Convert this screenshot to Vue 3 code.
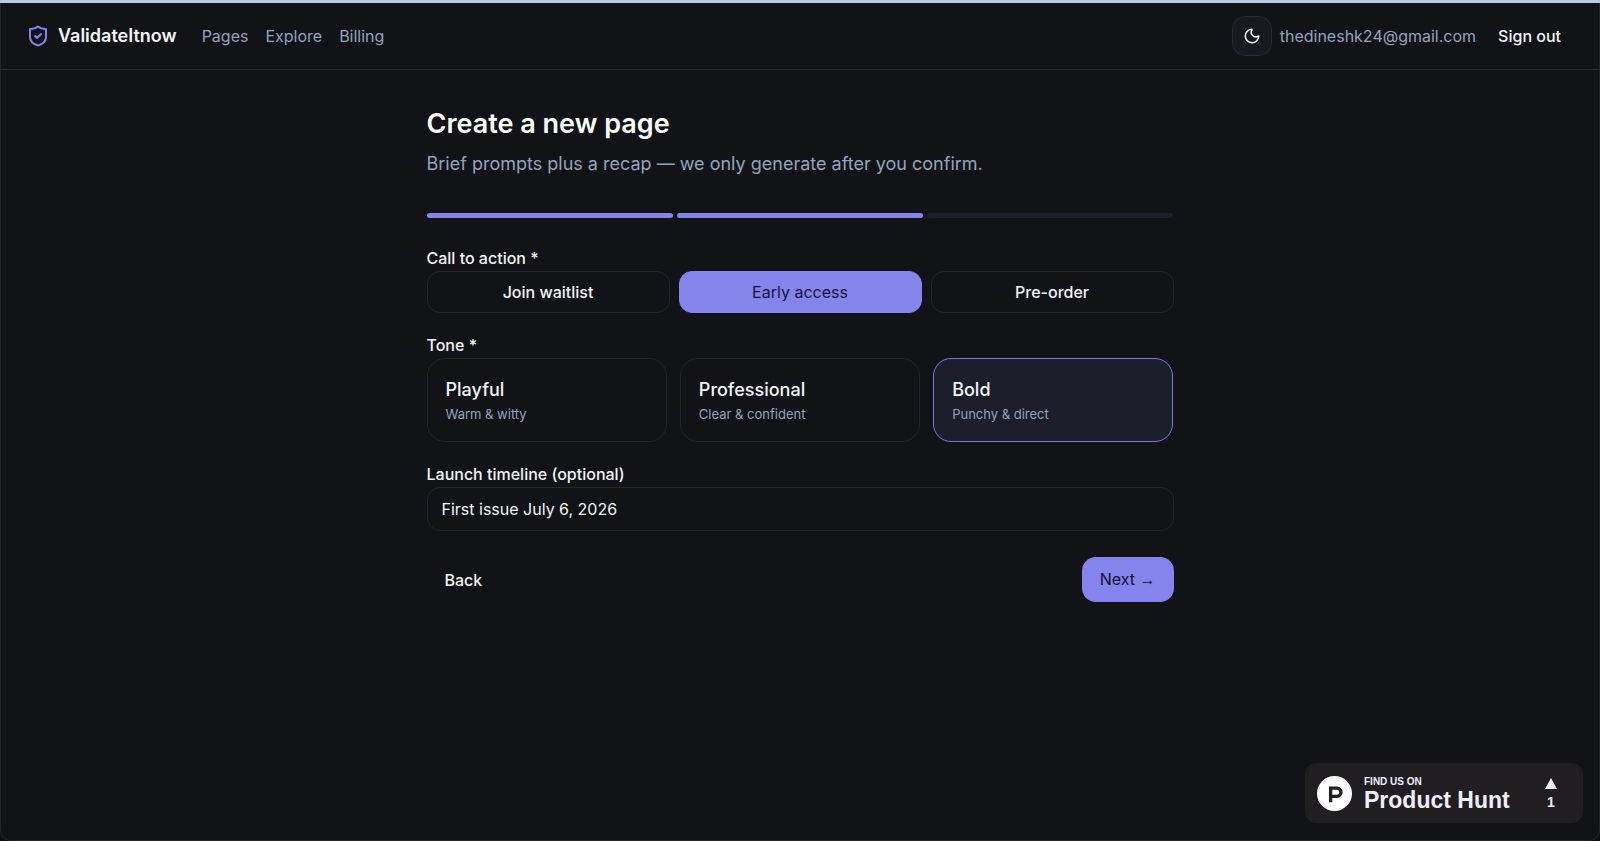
<script setup>
import { ref } from 'vue'

const links = ['Pages', 'Explore', 'Billing']
const steps = [1, 2, 3]
const currentStep = ref(2)
const actions = ['Join waitlist', 'Early access', 'Pre-order']
const action = ref('Early access')
const tones = [
  { name: 'Playful', hint: 'Warm & witty' },
  { name: 'Professional', hint: 'Clear & confident' },
  { name: 'Bold', hint: 'Punchy & direct' },
]
const tone = ref('Bold')
const timeline = ref('First issue July 6, 2026')
</script>

<template>
  <div class="page">
    <div class="window">
      <header class="topbar">
        <a class="brand" href="#">
          <svg class="shield" viewBox="0 0 24 24" fill="none" stroke="currentColor" stroke-width="2" stroke-linecap="round" stroke-linejoin="round" aria-hidden="true">
            <path d="M12 2.500C10 4.200 7.500 5 4 5v8c0 4.500 3.200 7 8 8.500 4.800-1.500 8-4 8-8.500V5c-3.500 0-6-.8-8-2.500z" />
            <path d="m9 12 2 2 4-4" />
          </svg>
          <span>ValidateItnow</span>
        </a>
        <nav class="links">
          <a v-for="l in links" :key="l" href="#">{{ l }}</a>
        </nav>
        <div class="account">
          <button class="theme" type="button" aria-label="Toggle theme">
            <svg viewBox="0 0 24 24" fill="none" stroke="currentColor" stroke-width="2" stroke-linecap="round" stroke-linejoin="round" aria-hidden="true">
              <path d="M20.985 12.486a9 9 0 1 1-9.473-9.472c.405-.022.617.46.402.803a6 6 0 0 0 8.268 8.268c.344-.215.825-.004.803.401" />
            </svg>
          </button>
          <span class="email">thedineshk24@gmail.com</span>
          <button class="signout" type="button">Sign out</button>
        </div>
      </header>

      <main class="content">
        <h1>Create a new page</h1>
        <p class="lead">Brief prompts plus a recap — we only generate after you confirm.</p>

        <div class="progress">
          <span v-for="s in steps" :key="s" class="step" :class="{ done: s <= currentStep }"></span>
        </div>

        <section class="field" role="group" aria-labelledby="cta-label">
          <div id="cta-label" class="label">Call to action *</div>
          <div class="actions">
            <button v-for="a in actions" :key="a" type="button" class="action" :class="{ active: a === action }" :aria-pressed="a === action" @click="action = a">{{ a }}</button>
          </div>
        </section>

        <section class="field" role="group" aria-labelledby="tone-label">
          <div id="tone-label" class="label">Tone *</div>
          <div class="tones">
            <button v-for="t in tones" :key="t.name" type="button" class="tone" :class="{ active: t.name === tone }" :aria-pressed="t.name === tone" @click="tone = t.name">
              <span class="tone-name">{{ t.name }}</span>
              <span class="tone-hint">{{ t.hint }}</span>
            </button>
          </div>
        </section>

        <section class="field">
          <label class="label" for="timeline">Launch timeline (optional)</label>
          <input id="timeline" v-model="timeline" type="text" />
        </section>

        <div class="footer">
          <button class="back" type="button">Back</button>
          <button class="next" type="button">Next <span class="arrow">→</span></button>
        </div>
      </main>
    </div>

    <a class="hunt" href="#">
      <svg class="hunt-logo" viewBox="0 0 36 36" aria-hidden="true">
        <circle cx="18" cy="18" r="18" fill="#fff" />
        <path d="M14 27V12.500h6.500a4.200 4.200 0 0 1 0 8.400H14" fill="none" stroke="#211e21" stroke-width="3.400" />
      </svg>
      <span class="hunt-text">
        <span class="hunt-small">FIND US ON</span>
        <span class="hunt-big">Product Hunt</span>
      </span>
      <span class="votes">
        <svg viewBox="0 0 12 11" aria-hidden="true"><path d="M6 0l6 11H0z" fill="#eef0ff" /></svg>
        <span>1</span>
      </span>
    </a>
  </div>
</template>

<style>
body {
  background: #0c0f0f;
}
</style>

<style scoped>
.page {
  box-sizing: border-box;
  min-height: 100vh;
  display: flex;
  border-top: 3px solid #b8cae8;
  font-family: Inter, "Liberation Sans", sans-serif;
  font-size: 16px;
  line-height: 24px;
  color: #f4f5f8;
}
.page *,
.page *::before {
  box-sizing: border-box;
}
.window {
  flex: 1;
  background: #111316;
  border: 1px solid #24262b;
  border-top: 0;
  border-radius: 0 0 10px 10px;
}
button,
input {
  font: inherit;
  color: inherit;
  margin: 0;
}
button {
  cursor: pointer;
}
a {
  color: inherit;
  text-decoration: none;
}
.topbar {
  display: flex;
  align-items: center;
  height: 67px;
  padding: 0 20px 0 25px;
  border-bottom: 1px solid #26282d;
}
.brand {
  display: flex;
  align-items: center;
  gap: 8px;
  font-size: 18px;
  font-weight: 600;
}
.shield {
  width: 24px;
  height: 24px;
  color: #8583ec;
}
.links {
  display: flex;
  gap: 17px;
  margin-left: 25px;
  color: #94a3bf;
}
.account {
  display: flex;
  align-items: center;
  margin-left: auto;
}
.theme {
  width: 40px;
  height: 40px;
  padding: 0;
  display: grid;
  place-items: center;
  border: 1px solid #292b32;
  border-radius: 13px;
  background: #181a21;
}
.theme svg {
  width: 18px;
  height: 18px;
}
.email {
  margin-left: 8px;
  color: #94a3bf;
}
.signout {
  margin-left: 4px;
  padding: 9px 18px;
  border: 0;
  background: none;
  font-weight: 500;
}
.content {
  max-width: 747px;
  margin: 0 auto;
  padding: 36px 0;
}
h1 {
  margin: 0;
  font-size: 27px;
  line-height: 36px;
  font-weight: 600;
  color: #fff;
}
.lead {
  margin: 8px 0 0;
  font-size: 18px;
  line-height: 28px;
  color: #94a3bf;
}
.progress {
  display: grid;
  grid-template-columns: repeat(3, 1fr);
  gap: 4px;
  margin: 35px 0 27px;
}
.step {
  height: 5px;
  border-radius: 3px;
  background: #1e1f28;
}
.step.done {
  background: #8583ec;
}
.field {
  margin-bottom: 19px;
}
.label {
  display: block;
  line-height: 26px;
  font-weight: 500;
}
.actions {
  display: grid;
  grid-template-columns: repeat(3, 1fr);
  gap: 9px;
}
.action {
  height: 42px;
  padding: 0 18px;
  border: 1px solid #24262d;
  border-radius: 13px;
  background: transparent;
  font-weight: 500;
}
.action.active {
  border-color: #8583ec;
  background: #8583ec;
  color: #15163a;
  font-weight: 400;
}
.tones {
  display: grid;
  grid-template-columns: repeat(3, 1fr);
  gap: 13px;
}
.tone {
  display: flex;
  flex-direction: column;
  align-items: flex-start;
  height: 84px;
  padding: 18px;
  border: 1px solid #24262d;
  border-radius: 18px;
  background: transparent;
  text-align: left;
}
.tone.active {
  border-color: #7a79dc;
  background: #1c1e2b;
}
.tone-name {
  font-size: 18px;
  line-height: 26px;
  font-weight: 500;
}
.tone-hint {
  font-size: 13px;
  line-height: 22px;
  color: #94a3bf;
}
input {
  display: block;
  width: 100%;
  height: 44px;
  padding: 0 14px;
  border: 1px solid #24262f;
  border-radius: 13px;
  background: transparent;
  outline: none;
}
.footer {
  display: flex;
  justify-content: space-between;
  margin-top: 26px;
}
.back,
.next {
  height: 45px;
  padding: 0 18px;
  border: 0;
  border-radius: 14px;
  background: none;
  font-weight: 500;
}
.next {
  background: #8583ec;
  color: #101233;
  font-weight: 400;
}
.arrow {
  font-family: "Liberation Sans", Arial, sans-serif;
}
.hunt {
  position: fixed;
  right: 17px;
  bottom: 18px;
  display: flex;
  align-items: center;
  width: 278px;
  height: 60px;
  padding: 0 26px 0 12px;
  border-radius: 11px;
  background: #211e21;
  color: #eef0ff;
  font-family: "Liberation Sans", Arial, sans-serif;
  font-weight: 700;
}
.hunt-logo {
  width: 35px;
  height: 35px;
}
.hunt-text {
  display: flex;
  flex-direction: column;
  margin-left: 12px;
  padding-top: 2px;
}
.hunt-small {
  font-size: 10px;
  line-height: 12px;
}
.hunt-big {
  font-size: 23px;
  line-height: 24px;
}
.votes {
  display: flex;
  flex-direction: column;
  align-items: center;
  margin-left: auto;
  padding-top: 2px;
  font-size: 14px;
  line-height: 18px;
  gap: 4px;
}
.votes svg {
  width: 12px;
  height: 11px;
}
</style>
